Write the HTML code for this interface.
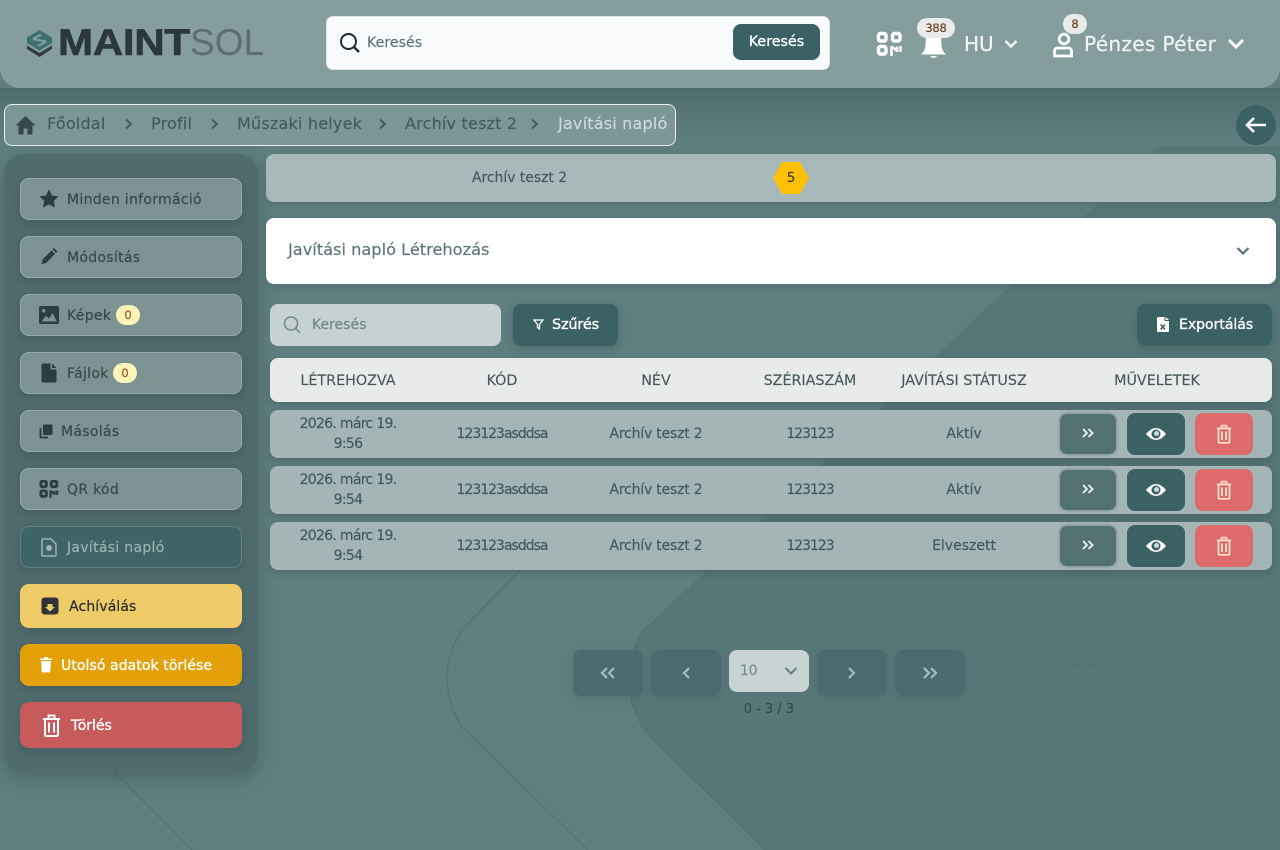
<!DOCTYPE html>
<html lang="hu"><head><meta charset="utf-8"><title>Javítási napló</title>
<style>
*{box-sizing:border-box}
html,body{margin:0;padding:0}
body{width:1280px;height:850px;position:relative;overflow:hidden;background:#5f7e80;font-family:"DejaVu Sans","Liberation Sans",sans-serif}
.a,.t{position:absolute}
.t{white-space:nowrap;line-height:20px;height:20px;margin-top:3px;-webkit-text-stroke:.15px currentColor}
.c{text-align:center}
svg{position:absolute;display:block}
.nav{position:absolute;left:20px;width:222px;height:42px;border-radius:9px;background:#7c9293;border:1px solid #95a9a9;box-shadow:0 3px 8px rgba(40,60,65,.3)}
.tl{font-size:14px;letter-spacing:.3px;color:#36474d}
.row{position:absolute;left:270px;width:1002px;height:48px;background:#a3b6b5;border-radius:8px;box-shadow:0 3px 8px rgba(50,70,72,.35)}
.rt{font-size:14px;color:#435659;letter-spacing:-.7px}
.rc{letter-spacing:-1px}
.rn{letter-spacing:-1px}
.rw{letter-spacing:-.2px}
.rs{letter-spacing:0}
.b1{position:absolute;left:1060px;width:56px;height:40px;border-radius:7px;background:#547174;box-shadow:0 0 3px rgba(50,70,72,.5)}
.b2{position:absolute;left:1127px;width:58px;height:42px;border-radius:8px;background:#3b6165}
.b3{position:absolute;left:1195px;width:58px;height:42px;border-radius:8px;background:#dd6b6b}
.pg{position:absolute;top:650px;width:70px;height:46px;border-radius:8px;background:#4a6a70;box-shadow:0 3px 8px rgba(50,75,80,.15)}
.th{font-size:14.3px;color:#47595d;top:368px}
.bc{font-size:16px;letter-spacing:.2px;color:#3f5a62;top:111px}
.bd{margin-top:0}
</style></head><body>

<svg style="left:0;top:0" width="1280" height="850" viewBox="0 0 1280 850">
<defs><linearGradient id="h" x1="0" y1="0" x2="0" y2="1"><stop offset="0" stop-color="#4d6a6c"/><stop offset="1" stop-color="#587678" stop-opacity="0"/></linearGradient></defs>
<path d="M1159 146H1280V850H765L647 733Q615 690 641 633Z" fill="#577678"/>
<rect x="0" y="88" width="1280" height="62" fill="url(#h)"/>
<path d="M520 570L462 630Q432 678 462 727L588 850M709 570L641 633Q615 690 647 733L765 850M877 850L1034 690Q1082 640 1130 687L1280 837M0 657L192 850" fill="none" stroke="#527174" stroke-width="1.200"/>
</svg>

<!-- Header -->
<div class="a" style="left:0;top:0;width:1280px;height:88px;background:#869d9e;border-radius:0 0 20px 20px"></div>
<svg style="left:25px;top:29px" width="30" height="30" viewBox="0 0 30 30"><path d="M14.500 1L27 8.500V14L14.500 21.500L2 14V8.500Z" fill="#3f6e72"/><path d="M8 10L16 5.500M13 17L21 12.500M8 10L21 12.500" stroke="#869d9e" stroke-width="2" fill="none"/><path d="M2 16.500L14.500 24L27 16.500V20L14.500 28L2 20Z" fill="#2f3d44"/></svg>
<div class="t" style="left:58px;top:25px;height:36px;margin:0;font:900 37px/36px 'Liberation Sans',sans-serif;color:#2b373e;letter-spacing:-.3px;transform-origin:left center;transform:scaleX(1.14);-webkit-text-stroke:.6px #2b373e">MAINT</div>
<div class="t" style="left:190px;top:25px;height:36px;margin:0;font:400 37px/36px 'Liberation Sans',sans-serif;color:#5a6e74;letter-spacing:.1px;-webkit-text-stroke:0">SOL</div>

<div class="a" style="left:326px;top:16px;width:504px;height:54px;background:#f8fafc;border-radius:7px;border:1px solid #dfe6e8"></div>
<svg style="left:338px;top:31px" width="24" height="24" viewBox="0 0 24 24"><circle cx="10.500" cy="10.500" r="7.500" fill="none" stroke="#1e2a2e" stroke-width="2"/><path d="M16 16L21 21" stroke="#1e2a2e" stroke-width="2.400"/></svg>
<div class="t" style="left:367px;top:30px;font-size:14.200px;color:#5f7478">Keresés</div>
<div class="a" style="left:733px;top:24px;width:87px;height:36px;background:#3b6165;border-radius:8px"></div>
<div class="t c" style="left:733px;width:87px;top:29px;font-size:14.300px;color:#fff;-webkit-text-stroke:.3px #fff">Keresés</div>

<svg style="left:876px;top:31px" width="27" height="26" viewBox="0 0 27 26" fill="none" stroke="#fff" stroke-width="3.400"><rect x="2.500" y="2.500" width="7.500" height="7.500" rx="2"/><rect x="16.500" y="2.500" width="7.500" height="7.500" rx="2"/><rect x="2.500" y="15.500" width="7.500" height="7.500" rx="2"/><path d="M15.500 25V15M15.500 15.500L20 19M21 15.500V21M24.500 15V21" stroke-width="2.500"/></svg>
<svg style="left:920px;top:32px" width="27" height="28" viewBox="0 0 27 28"><path d="M6 4H21L21.500 14Q22 19 26 22.500H1Q5 19 5.500 14Z" fill="#fff"/><path d="M10 24H17Q13.500 28 10 24Z" fill="#fff"/></svg>
<div class="a" style="left:917px;top:18px;width:38px;height:20px;border-radius:10px;background:#e9ebeb"></div>
<div class="t c bd" style="left:917px;width:38px;top:18px;font-size:11.500px;color:#6d3b1c;letter-spacing:-.2px">388</div>
<div class="t" style="left:964px;top:31px;font-size:20px;color:#f3f6f6">HU</div>
<svg style="left:1003px;top:37px" width="16" height="14" viewBox="0 0 16 14"><path d="M2.500 4L8 9.500L13.500 4" fill="none" stroke="#f3f6f6" stroke-width="2.400"/></svg>
<svg style="left:1052px;top:30px" width="22" height="29" viewBox="0 0 22 29" fill="none" stroke="#fff" stroke-width="2.800"><circle cx="12" cy="9" r="4.800"/><path d="M2.500 26V21.500Q2.500 18 6 18H16Q19.500 18 19.500 21.500V26Z"/></svg>
<div class="a" style="left:1063px;top:14px;width:24px;height:20px;border-radius:10px;background:#e9ebeb"></div>
<div class="t c bd" style="left:1063px;width:24px;top:14px;font-size:11.500px;color:#6d3b1c">8</div>
<div class="t" style="left:1084px;top:31px;font-size:20.200px;letter-spacing:.25px;color:#f3f6f6">Pénzes Péter</div>
<svg style="left:1226px;top:35px" width="20" height="18" viewBox="0 0 20 18"><path d="M3 5L10 12L17 5" fill="none" stroke="#fff" stroke-width="3"/></svg>

<!-- Breadcrumb -->
<div class="a" style="left:4px;top:104px;width:672px;height:42px;border:1px solid #e6eeee;border-radius:8px;background:rgba(134,157,158,.8)"></div>
<svg style="left:15px;top:115px" width="21" height="20" viewBox="0 0 21 20"><path d="M10.500 1L20.500 10.500H17.500V19.500H12.500V13.500H8.500V19.500H3.500V10.500H.5Z" fill="#34474f"/></svg>
<div class="t bc" style="left:47px">Főoldal</div>
<div class="t bc" style="left:151px">Profil</div>
<div class="t bc" style="left:237px">Műszaki helyek</div>
<div class="t bc" style="left:405px">Archív teszt 2</div>
<div class="t bc" style="left:558px;color:#cfdada">Javítási napló</div>
<svg style="left:0;top:115px" width="560" height="18" viewBox="0 0 560 18" fill="none" stroke="#3f5a62" stroke-width="2"><path d="M126 4.500L131 9L126 13.500M212 4.500L217 9L212 13.500M380 4.500L385 9L380 13.500M532 4.500L537 9L532 13.500"/></svg>
<div class="a" style="left:1236px;top:105px;width:40px;height:40px;border-radius:50%;background:#3b6165"></div>
<svg style="left:1244px;top:115px" width="24" height="20" viewBox="0 0 24 20"><path d="M22 10H3M10 3L3 10L10 17" fill="none" stroke="#fff" stroke-width="2.600"/></svg>

<!-- Sidebar -->
<div class="a" style="left:4px;top:154px;width:254px;height:618px;border-radius:20px;background:#4f6b6d;box-shadow:0 6px 16px rgba(50,70,72,.45)"></div>

<div class="nav" style="top:178px"></div>
<svg style="left:39px;top:189px" width="20" height="19" viewBox="0 0 20 19"><path d="M10 1.500L12.700 7L18.500 7.700L14.200 11.800L15.400 17.700L10 14.800L4.600 17.700L5.800 11.800L1.500 7.700L7.300 7Z" fill="#2d3b42" stroke="#2d3b42" stroke-linejoin="round"/></svg>
<div class="t tl" style="left:67px;top:187px">Minden információ</div>

<div class="nav" style="top:236px"></div>
<svg style="left:40px;top:247px" width="18" height="18" viewBox="0 0 18 18"><path d="M1.500 17L2.500 12.500L11.500 3.500L15 7L6 16ZM12.500 2.500L14 1L17.500 4.500L16 6Z" fill="#2d3b42"/></svg>
<div class="t tl" style="left:67px;top:245px">Módosítás</div>

<div class="nav" style="top:294px"></div>
<svg style="left:39px;top:306px" width="20" height="18" viewBox="0 0 20 18"><rect width="20" height="18" rx="2" fill="#2d3b42"/><circle cx="4.800" cy="4.800" r="1.800" fill="#7c9293"/><path d="M2.500 15.500L7 9.500L10 12.500L13.500 7L18 15.500Z" fill="#7c9293"/></svg>
<div class="t tl" style="left:67px;top:303px">Képek</div>
<div class="a" style="left:116px;top:305px;width:24px;height:20px;border-radius:10px;background:#fdf3b8"></div>
<div class="t c bd" style="left:116px;width:24px;top:305px;font-size:11.500px;color:#8a5a10">0</div>

<div class="nav" style="top:352px"></div>
<svg style="left:41px;top:363px" width="16" height="20" viewBox="0 0 16 20"><path d="M2 .5H9.500V6.500H15.500V18Q15.500 19.500 14 19.500H2Q.5 19.500 .5 18V2Q.5 .5 2 .5ZM11 .5L15.500 5H11Z" fill="#2d3b42"/></svg>
<div class="t tl" style="left:67px;top:361px">Fájlok</div>
<div class="a" style="left:113px;top:363px;width:24px;height:20px;border-radius:10px;background:#fdf3b8"></div>
<div class="t c bd" style="left:113px;width:24px;top:363px;font-size:11.500px;color:#8a5a10">0</div>

<div class="nav" style="top:410px"></div>
<svg style="left:39px;top:424px" width="14" height="15" viewBox="0 0 14 15"><path d="M5 .5H12.500Q13.500 .5 13.500 1.500V10Q13.500 11 12.500 11H5Q4 11 4 10V1.500Q4 .5 5 .5Z" fill="#2d3b42"/><path d="M1.500 4V13.500H9" fill="none" stroke="#2d3b42" stroke-width="1.800"/></svg>
<div class="t tl" style="left:61px;top:419px">Másolás</div>

<div class="nav" style="top:468px"></div>
<svg style="left:39px;top:479px" width="20" height="20" viewBox="0 0 27 26" fill="none" stroke="#2d3b42" stroke-width="3.800"><rect x="2.500" y="2.500" width="7.500" height="7.500" rx="2"/><rect x="16.500" y="2.500" width="7.500" height="7.500" rx="2"/><rect x="2.500" y="15.500" width="7.500" height="7.500" rx="2"/><path d="M15.500 25V15M15.500 15.500L20 19M21 15.500V21M24.500 15V21" stroke-width="2.800"/></svg>
<div class="t tl" style="left:67px;top:477px">QR kód</div>

<div class="nav" style="top:526px;background:#3f6468;border-color:#5f8084"></div>
<svg style="left:41px;top:538px" width="16" height="19" viewBox="0 0 16 19" fill="none" stroke="#9fb2b4" stroke-width="1.500"><path d="M2 1H10L15 6V17Q15 18 14 18H2Q1 18 1 17V2Q1 1 2 1Z"/><circle cx="8" cy="10" r="2.200" fill="#9fb2b4"/></svg>
<div class="t tl" style="left:67px;top:535px;color:#9fb2b4">Javítási napló</div>

<div class="a" style="left:20px;top:584px;width:222px;height:44px;border-radius:9px;background:#efcb68;box-shadow:0 3px 8px rgba(40,60,65,.3)"></div>
<svg style="left:41px;top:597px" width="18" height="18" viewBox="0 0 18 18"><rect x=".5" y=".5" width="17" height="17" rx="3" fill="#2f3438"/><path d="M6.500 7H11.500V10H14L9 14.500L4 10H6.500Z" fill="#efcb68"/></svg>
<div class="t" style="left:69px;top:594px;font-size:14.200px;color:#22292e">Achíválás</div>

<div class="a" style="left:20px;top:644px;width:222px;height:42px;border-radius:9px;background:#e3a008;box-shadow:0 3px 8px rgba(40,60,65,.3)"></div>
<svg style="left:39px;top:656px" width="14" height="17" viewBox="0 0 14 17"><path d="M1 2.500H4.500L5.500 1H8.500L9.500 2.500H13V4H1ZM2 5H12L11.300 15.500Q11.200 16.500 10.200 16.500H3.800Q2.800 16.500 2.700 15.500Z" fill="#fff"/></svg>
<div class="t" style="left:61px;top:653px;font-size:14px;letter-spacing:.08px;color:#fff;-webkit-text-stroke:.35px #fff">Utolsó adatok törlése</div>

<div class="a" style="left:20px;top:702px;width:222px;height:46px;border-radius:9px;background:#c75a5a;box-shadow:0 3px 8px rgba(40,60,65,.3)"></div>
<svg style="left:42px;top:714px" width="19" height="23" viewBox="0 0 19 23" fill="none" stroke="#fff" stroke-width="2"><path d="M1 5H18M6.500 5V1.500H12.500V5M3 5V20.500Q3 22 4.500 22H14.500Q16 22 16 20.500V5M7 8.500V18.500M12 8.500V18.500"/></svg>
<div class="t" style="left:71px;top:713px;font-size:14px;color:#fff;-webkit-text-stroke:.35px #fff">Törlés</div>

<!-- Top bar -->
<div class="a" style="left:266px;top:154px;width:1010px;height:48px;border-radius:8px;background:#a7b9b9;box-shadow:0 3px 8px rgba(50,70,72,.25)"></div>
<div class="t" style="left:472px;top:165px;font-size:13.900px;color:#445659">Archív teszt 2</div>
<svg style="left:773px;top:162px" width="36" height="32" viewBox="0 0 36 32"><path d="M9 0H27L36 16L27 32H9L0 16Z" fill="#ffc107"/></svg>
<div class="t c" style="left:773px;width:36px;top:165px;font-size:13.500px;color:#3a3a30">5</div>

<!-- Accordion -->
<div class="a" style="left:266px;top:218px;width:1010px;height:66px;border-radius:8px;background:#fff;box-shadow:0 3px 8px rgba(50,70,72,.25)"></div>
<div class="t" style="left:288px;top:237px;font-size:16.200px;color:#5d7376">Javítási napló Létrehozás</div>
<svg style="left:1235px;top:244px" width="16" height="14" viewBox="0 0 16 14"><path d="M2.500 4L8 9.500L13.500 4" fill="none" stroke="#5a7074" stroke-width="2.200"/></svg>

<!-- Toolbar -->
<div class="a" style="left:270px;top:304px;width:231px;height:42px;border-radius:8px;background:#c5d2d1"></div>
<svg style="left:282px;top:315px" width="20" height="20" viewBox="0 0 20 20"><circle cx="9" cy="8.500" r="6.500" fill="none" stroke="#6e8486" stroke-width="1.500"/><path d="M13.800 13.500L18 18" stroke="#6e8486" stroke-width="1.500"/></svg>
<div class="t" style="left:312px;top:312px;font-size:14px;color:#6f8587">Keresés</div>
<div class="a" style="left:513px;top:304px;width:105px;height:42px;border-radius:8px;background:#3b6165;box-shadow:0 3px 8px rgba(50,70,72,.3)"></div>
<svg style="left:533px;top:319px" width="11" height="11" viewBox="0 0 11 11"><path d="M1 1H10L6.500 5.500V10L4.500 8.500V5.500Z" fill="none" stroke="#fff" stroke-width="1.300"/></svg>
<div class="t" style="left:552px;top:312px;font-size:14.500px;color:#fff;letter-spacing:-.2px;-webkit-text-stroke:.35px #fff">Szűrés</div>
<div class="a" style="left:1137px;top:304px;width:135px;height:42px;border-radius:8px;background:#3b6165;box-shadow:0 3px 8px rgba(50,70,72,.3)"></div>
<svg style="left:1157px;top:317px" width="12" height="15" viewBox="0 0 12 15"><path d="M1 0H7.500V4H12V14Q12 15 11 15H1Q0 15 0 14V1Q0 0 1 0ZM8.500 0L12 3H8.500Z" fill="#fff"/><path d="M3.500 7.500L8 12.500M8 7.500L3.500 12.500" stroke="#3b6165" stroke-width="1.500"/></svg>
<div class="t" style="left:1179px;top:312px;font-size:14px;color:#fff;-webkit-text-stroke:.3px #fff">Exportálás</div>

<!-- Table -->
<div class="a" style="left:270px;top:358px;width:1002px;height:44px;border-radius:8px;background:#e9ebeb;box-shadow:0 3px 8px rgba(50,70,72,.35)"></div>
<div class="t c th" style="left:248px;width:200px">LÉTREHOZVA</div>
<div class="t c th" style="left:402px;width:200px">KÓD</div>
<div class="t c th" style="left:556px;width:200px">NÉV</div>
<div class="t c th" style="left:710px;width:200px">SZÉRIASZÁM</div>
<div class="t c th" style="left:864px;width:200px">JAVÍTÁSI STÁTUSZ</div>
<div class="t c th" style="left:1057px;width:200px">MŰVELETEK</div>

<!-- Row 1 -->
<div class="row" style="top:410px"></div>
<div class="t c rt" style="left:248px;width:200px;top:411px">2026. márc 19.</div>
<div class="t c rt" style="left:248px;width:200px;top:431px">9:56</div>
<div class="t c rt rc" style="left:402px;width:200px;top:421px">123123asddsa</div>
<div class="t c rt rw" style="left:556px;width:200px;top:421px">Archív teszt 2</div>
<div class="t c rt rn" style="left:710px;width:200px;top:421px">123123</div>
<div class="t c rt rs" style="left:864px;width:200px;top:421px">Aktív</div>
<div class="b1" style="top:414px"></div><div class="b2" style="top:413px"></div><div class="b3" style="top:413px"></div>
<svg style="left:1080px;top:426px" width="16" height="14" viewBox="0 0 16 14" fill="none" stroke="#f0f4f4" stroke-width="1.800"><path d="M3 3L7 7L3 11M8.500 3L12.500 7L8.500 11"/></svg>
<svg style="left:1145px;top:425px" width="22" height="18" viewBox="0 0 22 18"><path d="M1 9Q11 -3 21 9Q11 21 1 9Z" fill="#fff"/><circle cx="11" cy="9" r="4.500" fill="#3b6165"/><circle cx="11.500" cy="8.500" r="2.500" fill="#fff" opacity=".75"/></svg>
<svg style="left:1216px;top:424px" width="16" height="20" viewBox="0 0 19 23" fill="none" stroke="#fbe4d4" stroke-width="2"><path d="M1 5H18M6.500 5V1.500H12.500V5M3 5V20.500Q3 22 4.500 22H14.500Q16 22 16 20.500V5M7 8.500V18.500M12 8.500V18.500"/></svg>

<!-- Row 2 -->
<div class="row" style="top:466px"></div>
<div class="t c rt" style="left:248px;width:200px;top:467px">2026. márc 19.</div>
<div class="t c rt" style="left:248px;width:200px;top:487px">9:54</div>
<div class="t c rt rc" style="left:402px;width:200px;top:477px">123123asddsa</div>
<div class="t c rt rw" style="left:556px;width:200px;top:477px">Archív teszt 2</div>
<div class="t c rt rn" style="left:710px;width:200px;top:477px">123123</div>
<div class="t c rt rs" style="left:864px;width:200px;top:477px">Aktív</div>
<div class="b1" style="top:470px"></div><div class="b2" style="top:469px"></div><div class="b3" style="top:469px"></div>
<svg style="left:1080px;top:482px" width="16" height="14" viewBox="0 0 16 14" fill="none" stroke="#f0f4f4" stroke-width="1.800"><path d="M3 3L7 7L3 11M8.500 3L12.500 7L8.500 11"/></svg>
<svg style="left:1145px;top:481px" width="22" height="18" viewBox="0 0 22 18"><path d="M1 9Q11 -3 21 9Q11 21 1 9Z" fill="#fff"/><circle cx="11" cy="9" r="4.500" fill="#3b6165"/><circle cx="11.500" cy="8.500" r="2.500" fill="#fff" opacity=".75"/></svg>
<svg style="left:1216px;top:480px" width="16" height="20" viewBox="0 0 19 23" fill="none" stroke="#fbe4d4" stroke-width="2"><path d="M1 5H18M6.500 5V1.500H12.500V5M3 5V20.500Q3 22 4.500 22H14.500Q16 22 16 20.500V5M7 8.500V18.500M12 8.500V18.500"/></svg>

<!-- Row 3 -->
<div class="row" style="top:522px"></div>
<div class="t c rt" style="left:248px;width:200px;top:523px">2026. márc 19.</div>
<div class="t c rt" style="left:248px;width:200px;top:543px">9:54</div>
<div class="t c rt rc" style="left:402px;width:200px;top:533px">123123asddsa</div>
<div class="t c rt rw" style="left:556px;width:200px;top:533px">Archív teszt 2</div>
<div class="t c rt rn" style="left:710px;width:200px;top:533px">123123</div>
<div class="t c rt rs" style="left:864px;width:200px;top:533px">Elveszett</div>
<div class="b1" style="top:526px"></div><div class="b2" style="top:525px"></div><div class="b3" style="top:525px"></div>
<svg style="left:1080px;top:538px" width="16" height="14" viewBox="0 0 16 14" fill="none" stroke="#f0f4f4" stroke-width="1.800"><path d="M3 3L7 7L3 11M8.500 3L12.500 7L8.500 11"/></svg>
<svg style="left:1145px;top:537px" width="22" height="18" viewBox="0 0 22 18"><path d="M1 9Q11 -3 21 9Q11 21 1 9Z" fill="#fff"/><circle cx="11" cy="9" r="4.500" fill="#3b6165"/><circle cx="11.500" cy="8.500" r="2.500" fill="#fff" opacity=".75"/></svg>
<svg style="left:1216px;top:536px" width="16" height="20" viewBox="0 0 19 23" fill="none" stroke="#fbe4d4" stroke-width="2"><path d="M1 5H18M6.500 5V1.500H12.500V5M3 5V20.500Q3 22 4.500 22H14.500Q16 22 16 20.500V5M7 8.500V18.500M12 8.500V18.500"/></svg>

<!-- Pagination -->
<div class="pg" style="left:573px"></div>
<div class="pg" style="left:651px"></div>
<div class="a" style="left:729px;top:650px;width:80px;height:42px;border-radius:8px;background:#c8d4d3"></div>
<div class="pg" style="left:817px"></div>
<div class="pg" style="left:895px"></div>
<svg style="left:0;top:664px" width="960" height="18" viewBox="0 0 960 18" fill="none" stroke="#a8bcbc" stroke-width="2.200"><path d="M607 4L602 9L607 14M614 4L609 9L614 14M689 4L684 9L689 14M849 4L854 9L849 14M924 4L929 9L924 14M931 4L936 9L931 14"/></svg>
<div class="t" style="left:740px;top:658px;font-size:14px;color:#76888a;letter-spacing:-.3px">10</div>
<svg style="left:783px;top:664px" width="16" height="14" viewBox="0 0 16 14"><path d="M2.500 4L8 9.500L13.500 4" fill="none" stroke="#6a8284" stroke-width="2.200"/></svg>
<div class="t c" style="left:669px;width:200px;top:697px;font-size:13px;color:#36474d">0 - 3 / 3</div>
</body></html>
